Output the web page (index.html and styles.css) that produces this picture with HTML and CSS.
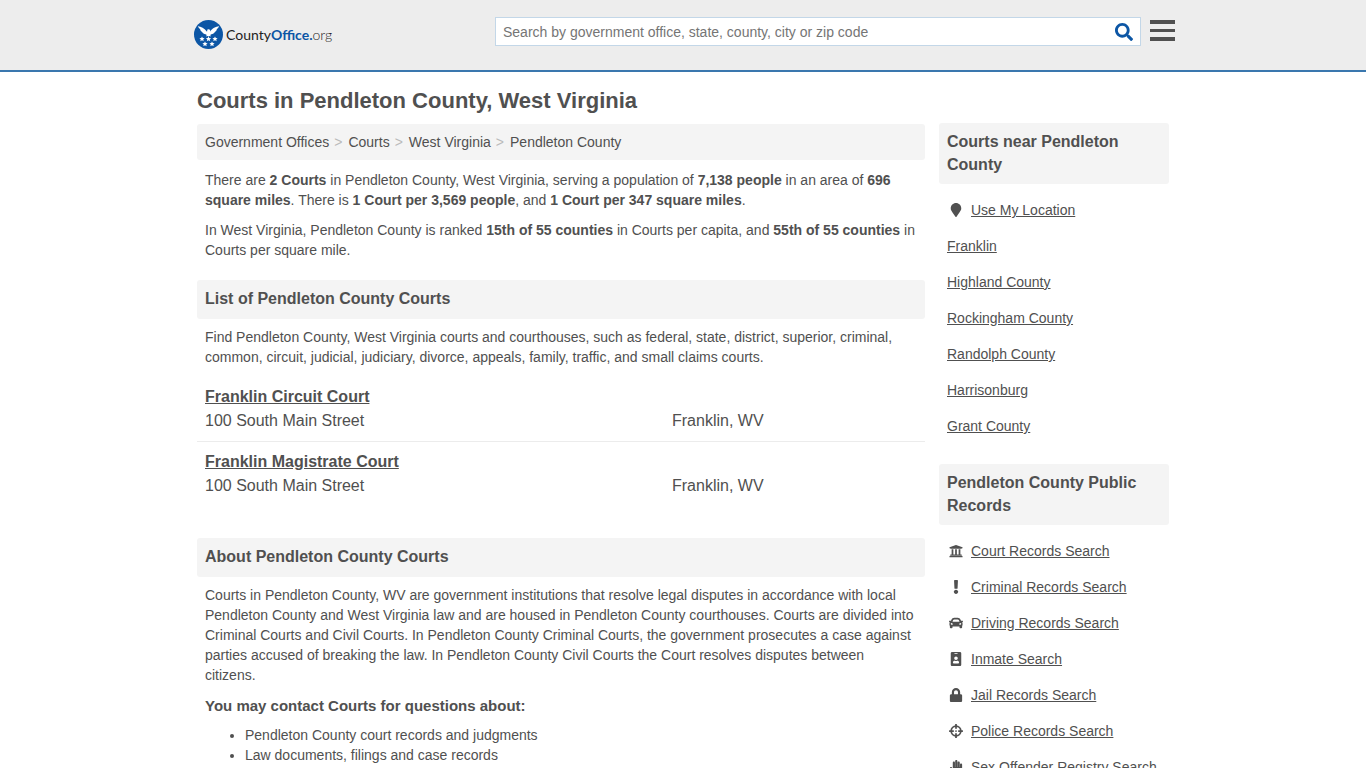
FILE: index.html
```html
<!DOCTYPE html>
<html lang="en">
<head>
  <meta charset="UTF-8">
  <meta name="viewport" content="width=device-width, initial-scale=1.0">
  <title>Courts in Pendleton County, West Virginia</title>
  <link rel="stylesheet" href="styles.css">
</head>
<body>
  <header class="site-header">
    <div class="header-inner">
      <a class="logo" href="#">
        <svg class="logo-mark" viewBox="0 0 29 29" aria-hidden="true">
          <defs>
            <path id="star" d="M0-2.6L.8-.9 2.6-.8 1.2.4 1.700 2.200 0 1.200-1.700 2.200-1.200.4-2.600-.8-.8-.9z"/>
          </defs>
          <circle cx="14.500" cy="14.500" r="14.500" fill="#0c56a5"/>
          <g fill="#fff">
            <path d="M4 6c3 1 6.500 2 8.600 5.600l.9-.6-.5-.9c.6-.8 1.900-1 2.700-.3.600.6.600 1.300.3 2C18.100 8 21.900 7 25 6c-.4 1.500-1.200 2.500-2.200 3.200-.2 1.300-1 2.200-2 2.700-.6 1.300-1.900 2.200-3.400 2.400l-1.200.6.900 1.600-1.500-.6-1.100.7-1.100-.7-1.500.6.900-1.600-1.200-.6c-1.500-.2-2.800-1.100-3.400-2.400-1-.5-1.800-1.400-2-2.700C5.200 8.500 4.400 7.500 4 6z"/>
            <use href="#star" x="8" y="19"/>
            <use href="#star" x="14.500" y="19"/>
            <use href="#star" x="21" y="19"/>
            <use href="#star" x="11" y="24"/>
            <use href="#star" x="18" y="24"/>
          </g>
        </svg>
        <span class="logo-text">County<b>Office.</b><span>org</span></span>
      </a>
      <form class="search">
        <input type="text" aria-label="Search" placeholder="Search by government office, state, county, city or zip code">
        <button type="submit" aria-label="Submit search">
          <svg viewBox="0 0 512 512" aria-hidden="true"><path d="M505 442.700L405.300 343c-4.500-4.500-10.600-7-17-7H372c27.600-35.300 44-79.700 44-128C416 93.100 322.900 0 208 0S0 93.100 0 208s93.100 208 208 208c48.300 0 92.700-16.400 128-44v16.300c0 6.400 2.500 12.500 7 17l99.700 99.700c9.400 9.400 24.600 9.400 33.900 0l28.300-28.300c9.400-9.400 9.400-24.600.1-34zM208 336c-70.700 0-128-57.200-128-128 0-70.700 57.200-128 128-128 70.700 0 128 57.200 128 128 0 70.700-57.200 128-128 128z"/></svg>
        </button>
      </form>
      <button class="menu" type="button" aria-label="Menu">
        <svg viewBox="0 0 25 21" aria-hidden="true"><path d="M0 0h25v4H0zM0 9h25v3H0zM0 17h25v4H0z"/></svg>
      </button>
    </div>
  </header>

  <div class="page">
    <main>
      <h1>Courts in Pendleton County, West Virginia</h1>
      <nav class="breadcrumb" aria-label="Breadcrumb">
        <a href="#">Government Offices</a><a href="#">Courts</a><a href="#">West Virginia</a><a href="#">Pendleton County</a>
      </nav>
      <div class="text">
        <p>There are <b>2 Courts</b> in Pendleton County, West Virginia, serving a population of <b>7,138 people</b> in an area of <b>696 square miles</b>. There is <b>1 Court per 3,569 people</b>, and <b>1 Court per 347 square miles</b>.</p>
        <p>In West Virginia, Pendleton County is ranked <b>15th of 55 counties</b> in Courts per capita, and <b>55th of 55 counties</b> in Courts per square mile.</p>
      </div>

      <section>
        <h2>List of Pendleton County Courts</h2>
        <p class="intro">Find Pendleton County, West Virginia courts and courthouses, such as federal, state, district, superior, criminal, common, circuit, judicial, judiciary, divorce, appeals, family, traffic, and small claims courts.</p>
        <ul class="listings">
          <li>
            <a href="#">Franklin Circuit Court</a>
            <span>100 South Main Street</span>
            <span>Franklin, WV</span>
          </li>
          <li>
            <a href="#">Franklin Magistrate Court</a>
            <span>100 South Main Street</span>
            <span>Franklin, WV</span>
          </li>
        </ul>
      </section>

      <section>
        <h2>About Pendleton County Courts</h2>
        <p class="intro">Courts in Pendleton County, WV are government institutions that resolve legal disputes in accordance with local Pendleton County and West Virginia law and are housed in Pendleton County courthouses. Courts are divided into Criminal Courts and Civil Courts. In Pendleton County Criminal Courts, the government prosecutes a case against parties accused of breaking the law. In Pendleton County Civil Courts the Court resolves disputes between citizens.</p>
        <h3>You may contact Courts for questions about:</h3>
        <ul class="topics">
          <li>Pendleton County court records and judgments</li>
          <li>Law documents, filings and case records</li>
        </ul>
      </section>
    </main>

    <aside>
      <section>
        <h2>Courts near Pendleton County</h2>
        <ul class="links">
          <li>
            <svg viewBox="0 0 384 512" aria-hidden="true"><path d="M172.268 501.670C26.970 291.031 0 269.413 0 192 0 85.961 85.961 0 192 0s192 85.961 192 192c0 77.413-26.970 99.031-172.268 309.670-9.535 13.774-29.930 13.773-39.464 0z"/></svg>
            <a href="#">Use My Location</a>
          </li>
          <li><a href="#">Franklin</a></li>
          <li><a href="#">Highland County</a></li>
          <li><a href="#">Rockingham County</a></li>
          <li><a href="#">Randolph County</a></li>
          <li><a href="#">Harrisonburg</a></li>
          <li><a href="#">Grant County</a></li>
        </ul>
      </section>

      <section>
        <h2>Pendleton County Public Records</h2>
        <ul class="links">
          <li>
            <svg viewBox="0 0 512 512" aria-hidden="true"><path d="M496 128v16a8 8 0 0 1-8 8h-24v12c0 6.627-5.373 12-12 12H60c-6.627 0-12-5.373-12-12v-12H24a8 8 0 0 1-8-8v-16a8 8 0 0 1 4.941-7.392l232-88a7.996 7.996 0 0 1 6.118 0l232 88A8 8 0 0 1 496 128zm-24 304H40c-13.255 0-24 10.745-24 24v16a8 8 0 0 0 8 8h464a8 8 0 0 0 8-8v-16c0-13.255-10.745-24-24-24zM96 192v192H60c-6.627 0-12 5.373-12 12v20h416v-20c0-6.627-5.373-12-12-12h-36V192h-64v192h-64V192h-64v192h-64V192H96z"/></svg>
            <a href="#">Court Records Search</a>
          </li>
          <li>
            <svg viewBox="0 0 192 512" aria-hidden="true"><path d="M176 432c0 44.112-35.888 80-80 80s-80-35.888-80-80 35.888-80 80-80 80 35.888 80 80zM25.260 25.199l13.600 272C39.499 309.972 50.041 320 62.830 320h66.340c12.789 0 23.331-10.028 23.970-22.801l13.600-272C167.425 11.490 156.496 0 142.770 0H49.230C35.504 0 24.575 11.490 25.260 25.199z"/></svg>
            <a href="#">Criminal Records Search</a>
          </li>
          <li>
            <svg viewBox="0 0 512 512" aria-hidden="true"><path d="M499.990 176h-59.870l-16.640-41.600C406.380 91.630 365.570 64 319.500 64h-127c-46.060 0-86.880 27.630-103.990 70.400L71.870 176H12.010C4.200 176-1.530 183.340.37 190.910l6 24C7.700 220.250 12.500 224 18.010 224h20.070C24.650 235.730 16 252.780 16 272v48c0 16.120 6.160 30.670 16 41.930V416c0 17.670 14.330 32 32 32h32c17.670 0 32-14.330 32-32v-32h256v32c0 17.670 14.330 32 32 32h32c17.670 0 32-14.330 32-32v-54.070c9.840-11.250 16-25.800 16-41.930v-48c0-19.220-8.650-36.270-22.070-48H494c5.510 0 10.310-3.750 11.640-9.090l6-24c1.890-7.570-3.840-14.910-11.650-14.910zm-352.060-17.830c7.290-18.220 24.940-30.170 44.570-30.170h127c19.630 0 37.280 11.950 44.570 30.170L384 208H128l19.930-49.830zM96 319.800c-19.200 0-32-12.760-32-31.900S76.800 256 96 256s48 28.710 48 47.850-28.800 15.950-48 15.950zm320 0c-19.200 0-48 3.190-48-15.950S396.800 256 416 256s32 12.760 32 31.900-12.800 31.900-32 31.900z"/></svg>
            <a href="#">Driving Records Search</a>
          </li>
          <li>
            <svg viewBox="0 0 384 512" aria-hidden="true"><path d="M336 0H48C21.500 0 0 21.500 0 48v416c0 26.500 21.500 48 48 48h288c26.500 0 48-21.500 48-48V48c0-26.500-21.500-48-48-48zM144 32h96c8.800 0 16 7.200 16 16s-7.200 16-16 16h-96c-8.800 0-16-7.200-16-16s7.200-16 16-16zm48 128c35.300 0 64 28.700 64 64s-28.700 64-64 64-64-28.700-64-64 28.700-64 64-64zm112 236.800c0 10.600-10 19.200-22.400 19.200H102.400C90 416 80 407.400 80 396.800v-19.200c0-31.800 30.100-57.600 67.200-57.600h5c12.300 5.100 25.700 8 39.800 8s27.600-2.900 39.800-8h5c37.100 0 67.200 25.800 67.200 57.600v19.200z"/></svg>
            <a href="#">Inmate Search</a>
          </li>
          <li>
            <svg viewBox="0 0 448 512" aria-hidden="true"><path d="M400 224h-24v-72C376 68.200 307.800 0 224 0S72 68.200 72 152v72H48c-26.500 0-48 21.500-48 48v192c0 26.500 21.500 48 48 48h352c26.500 0 48-21.500 48-48V272c0-26.500-21.500-48-48-48zm-104 0H152v-72c0-39.700 32.300-72 72-72s72 32.300 72 72v72z"/></svg>
            <a href="#">Jail Records Search</a>
          </li>
          <li>
            <svg viewBox="0 0 512 512" aria-hidden="true"><g fill="none" stroke="currentColor" stroke-width="64"><circle cx="256" cy="256" r="176"/><path d="M256 4v172M256 336v172M4 256h172M336 256h172"/></g><circle cx="256" cy="256" r="32"/></svg>
            <a href="#">Police Records Search</a>
          </li>
          <li>
            <svg viewBox="0 0 448 512" aria-hidden="true"><path d="M408.800 128c-22 .3-39.400 18.700-39.400 40.700V256H362V96.700c0-22-17.500-40.400-39.500-40.700-22.300-.3-40.500 17.700-40.500 40v160h-8V40.700C274 18.700 256.500.3 234.500 0 212.200-.3 194 17.700 194 40v216h-8V96.700c0-22-17.500-40.400-39.500-40.700C124.200 55.700 106 73.700 106 96v226l-33.600-46.200c-13-17.900-38-21.800-55.900-8.800s-21.800 38-8.800 55.900l126.600 174.100a40 40 0 0 0 32.400 16.500h208.500c18.600 0 34.700-12.800 39-30.800l26.600-115A124 124 0 0 0 448 340V168c0-22.300-18-40.300-39.200-40z"/></svg>
            <a href="#">Sex Offender Registry Search</a>
          </li>
        </ul>
      </section>
    </aside>
  </div>
</body>
</html>
```
FILE: styles.css
```css
:root {
  --text: #505050;
  --blue: #0c56a5;
  --panel: #f4f4f4;
}

* {
  box-sizing: border-box;
  margin: 0;
  padding: 0;
}

body {
  background: #fff;
  color: var(--text);
  font-family: "Liberation Sans", Arial, Helvetica, sans-serif;
  font-size: 14px;
  line-height: 20px;
}

a {
  color: inherit;
}

ul {
  list-style: none;
}

svg {
  fill: currentColor;
}

button {
  background: none;
  border: none;
  cursor: pointer;
}

/* header */
.site-header {
  background: #ededed;
  border-bottom: 2px solid #3a77ae;
}

.header-inner {
  display: flex;
  align-items: flex-start;
  max-width: 984px;
  height: 70px;
  margin: 0 auto;
  padding: 17px 0 0 3px;
}

.logo {
  display: flex;
  align-items: center;
  gap: 3px;
  margin-top: 3px;
  color: #222;
  text-decoration: none;
}

.logo-mark {
  width: 29px;
  height: 29px;
}

.logo-text {
  font-family: Lato, sans-serif;
  font-size: 14px;
}

.logo-text b {
  color: var(--blue);
}

.logo-text span {
  font-weight: 300;
}

.search {
  display: flex;
  flex: 0 1 646px;
  height: 29px;
  margin: 0 9px 0 auto;
  background: #fff;
  border: 1px solid #c3d7e8;
}

.search input {
  flex: 1;
  min-width: 0;
  padding: 0 7px;
  border: none;
  outline: none;
  background: none;
  color: var(--text);
  font: inherit;
}

.search input::placeholder {
  color: #757575;
}

.search button {
  display: flex;
  align-items: center;
  padding: 0 7px;
  color: var(--blue);
}

.search svg {
  width: 18px;
  height: 18px;
}

.menu {
  margin-top: 3px;
  color: var(--text);
}

.menu svg {
  display: block;
  width: 25px;
  height: 21px;
}

/* columns */
.page {
  display: grid;
  grid-template-columns: minmax(0, 1fr) 230px;
  gap: 14px;
  max-width: 972px;
  margin: 0 auto;
}

h1 {
  padding: 15px 0 9px;
  font-size: 22px;
  line-height: 28px;
}

h2 {
  padding: 7px 8px 9px;
  background: var(--panel);
  border-radius: 3px;
  font-size: 16px;
  line-height: 23px;
}

h3 {
  padding: 11px 8px 9px;
  font-size: 15px;
  line-height: 20px;
}

.breadcrumb {
  padding: 8px;
  background: var(--panel);
  border-radius: 3px;
}

.breadcrumb a {
  text-decoration: none;
}

.breadcrumb a + a::before {
  content: ">";
  margin: 0 6px 0 5px;
  color: #bbb;
}

.text {
  padding: 10px 8px 20px;
}

.text p + p {
  margin-top: 10px;
}

.intro {
  padding: 8px 8px 0;
}

/* court listings */
.listings {
  margin: 10px 0 32px;
  font-size: 16px;
  line-height: 24px;
}

.listings li {
  display: grid;
  grid-template-columns: 1fr 245px;
  padding: 8px;
}

.listings li + li {
  border-top: 1px solid #ececec;
}

.listings a {
  grid-column: 1 / -1;
  font-weight: bold;
}

.topics {
  padding-left: 48px;
  list-style: disc;
}

/* sidebar */
aside {
  padding-top: 51px;
}

aside section {
  margin-bottom: 20px;
}

aside h2 {
  padding-bottom: 8px;
}

.links {
  padding: 8px 8px 0;
}

.links li {
  display: flex;
  align-items: center;
  gap: 6px;
  height: 36px;
  white-space: nowrap;
}

.links svg {
  width: 18px;
  height: 14px;
}

@media (max-width: 800px) {
  .page {
    grid-template-columns: 1fr;
  }
}
```
